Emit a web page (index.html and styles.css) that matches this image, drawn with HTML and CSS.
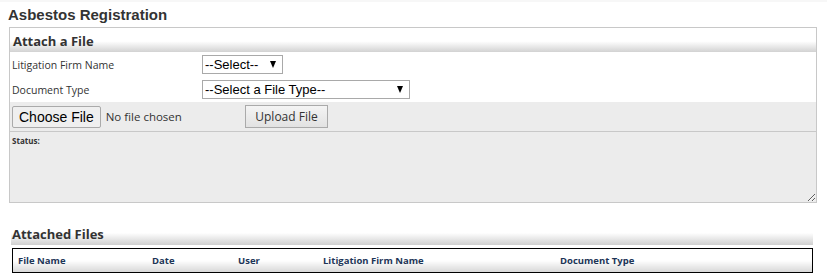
FILE: index.html
```html
<!DOCTYPE html>
<html lang="en">
  <head>
    <meta charset="UTF-8" />
    <title>Asbestos Registration</title>
    <link rel="stylesheet" href="styles.css">
  </head>
  <body>
    <div class="topbar"></div>
    <h1 class="page-title">Asbestos Registration</h1>

    <div class="panel">
      <div class="panel-head">Attach a File</div>
      <div class="field">
        <label>Litigation Firm Name</label>
        <span class="select-wrap select-firm">
          <select class="select"><option>--Select--</option></select>
        </span>
      </div>
      <div class="field">
        <label>Document Type</label>
        <span class="select-wrap select-type">
          <select class="select"><option>--Select a File Type--</option></select>
        </span>
      </div>
      <div class="upload-row">
        <div class="file-pick">
          <button class="btn-choose">Choose File</button>
          <span class="no-file">No file chosen</span>
        </div>
        <button class="btn-upload">Upload File</button>
      </div>
      <div class="status">
        <b>Status:</b>
      </div>
    </div>

    <div class="section-head">Attached Files</div>
    <table class="files">
      <thead>
        <tr>
          <th class="col-name">File Name</th>
          <th class="col-date">Date</th>
          <th class="col-user">User</th>
          <th class="col-firm">Litigation Firm Name</th>
          <th>Document Type</th>
        </tr>
      </thead>
    </table>
  </body>
</html>
```

FILE: styles.css
```css
:root {
  --border: #c8c8c8;
  --panel-grey: #ececec;
  --text: #333;
  --navy: #1d3557;
}

body {
  margin: 0;
  color: var(--text);
  font-family: "Open Sans", "Liberation Sans", sans-serif;
  background: #fff;
}

.topbar {
  height: 2px;
  background: #f7f7f7;
}

.page-title {
  margin: 3px 0 0 8px;
  font-family: "Liberation Sans", Arial, sans-serif;
  font-size: 15px;
  font-weight: bold;
  line-height: 20px;
  color: #333;
}

.panel {
  width: 806px;
  margin: 2px 0 0 9px;
  border: 1px solid var(--border);
}

.panel-head {
  height: 24px;
  padding-left: 3px;
  font-size: 13px;
  font-weight: bold;
  line-height: 26px;
  background: linear-gradient(#fff 0, #fff 55%, #d2d2d2 100%);
}

.field {
  display: grid;
  grid-template-columns: 190px auto;
  align-items: center;
  height: 25px;
  padding-left: 2px;
  font-size: 10.5px;
}

.field:first-of-type {
  margin-top: 1px;
}

.select-wrap {
  position: relative;
  display: block;
  height: 19px;
}

/* little black dropdown arrow */
.select-wrap::after {
  content: "";
  position: absolute;
  right: 7px;
  top: 6px;
  border-left: 3px solid transparent;
  border-right: 3px solid transparent;
  border-top: 7px solid #000;
  pointer-events: none;
}

.select-firm {
  width: 81px;
}

.select-type {
  width: 208px;
}

.select {
  -webkit-appearance: none;
  appearance: none;
  width: 100%;
  height: 19px;
  padding: 0 2px;
  border: 1px solid #a9a9a9;
  border-radius: 0;
  background: #fff;
  color: #000;
  font-family: "Liberation Sans", Arial, sans-serif;
  font-size: 13px;
}

.upload-row {
  display: flex;
  align-items: center;
  height: 29px;
  padding-left: 2px;
  background: var(--panel-grey);
  border-bottom: 1px solid var(--border);
}

.file-pick {
  display: flex;
  align-items: center;
  width: 233px;
}

.btn-choose {
  height: 22px;
  padding: 0 6px;
  border: 1px solid #aaa;
  border-radius: 2px;
  background: #efefef;
  color: #000;
  font-family: "Liberation Sans", Arial, sans-serif;
  font-size: 14px;
}

.no-file {
  margin-left: 5px;
  font-size: 11.5px;
  color: #333;
}

.btn-upload {
  height: 23px;
  width: 83px;
  border: 1px solid #aaa;
  background: linear-gradient(#f4f4f4, #e2e2e2);
  color: #333;
  font-family: "Open Sans", sans-serif;
  font-size: 12px;
}

.status {
  height: 64px;
  padding: 3px 2px;
  background: var(--panel-grey);
  font-size: 8px;
  overflow: auto;
  resize: vertical;
}

.section-head {
  width: 801px;
  height: 22px;
  margin: 20px 0 0 11px;
  padding-left: 1px;
  font-family: "Open Sans", sans-serif;
  font-size: 13px;
  font-weight: bold;
  line-height: 22px;
  color: #333;
  background: linear-gradient(#fff 0, #fff 45%, #d0d0d0 100%);
}

.files {
  width: 801px;
  margin: 3px 0 0 12px;
  border: 1px solid #000;
  border-collapse: collapse;
  background: linear-gradient(#fff 0, #fff 50%, #d6d6d6 100%);
}

.files th {
  height: 23px;
  padding: 0 0 0 5px;
  text-align: left;
  font-size: 9.5px;
  font-weight: bold;
  color: var(--navy);
}

.col-name { width: 129px; }
.col-date { width: 81px; }
.col-user { width: 80px; }
.col-firm { width: 232px; }
```
